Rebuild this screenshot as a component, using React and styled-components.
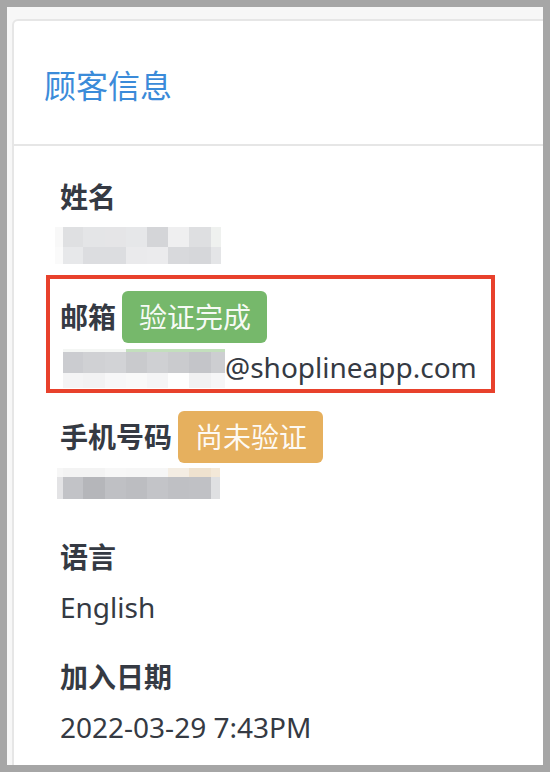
import React from "react";
import styled, { createGlobalStyle } from "styled-components";

const GlobalStyle = createGlobalStyle`
  html, body {
    margin: 0;
    padding: 0;
    background: #a6a6a6;
  }
  body {
    font-family: "Noto Sans", "Noto Sans CJK SC", sans-serif;
    -webkit-font-smoothing: antialiased;
  }
`;

const Frame = styled.div`
  width: 550px;
  height: 772px;
  box-sizing: border-box;
  border: 7px solid #a6a6a6;
  background: #f7f7f7;
  overflow: hidden;
  padding: 12px 0 0 5px;
`;

const Card = styled.section`
  width: 560px;
  min-height: 800px;
  box-sizing: border-box;
  background: #ffffff;
  border: 2px solid #e6e6e6;
  border-radius: 6px;
`;

const CardHeader = styled.header`
  height: 125px;
  box-sizing: border-box;
  display: flex;
  align-items: center;
  padding: 6px 30px 0;
  border-bottom: 2px solid #e6e6e6;
`;

const Title = styled.h2`
  margin: 0;
  font-size: 32px;
  font-weight: 400;
  line-height: 1;
  color: #3b8bd9;
`;

const CardBody = styled.div`
  padding: 25px 0 0 46px;
`;

const Field = styled.div`
  position: relative;
  display: flex;
  flex-direction: column;
  margin-bottom: 24px;
`;

const LabelRow = styled.div`
  height: 52px;
  display: flex;
  align-items: center;
  gap: 6px;
`;

const Label = styled.span`
  font-size: 28px;
  font-weight: 700;
  color: #353a43;
  line-height: 1;
`;

const badgeTones = {
  success: "#76b86b",
  warning: "#e6b05e",
};

const Badge = styled.span`
  height: 52px;
  display: inline-flex;
  align-items: center;
  padding: 0 16px 0 17px;
  border-radius: 6px;
  background: ${(p) => badgeTones[p.$tone]};
  color: rgba(255, 255, 255, 0.94);
  font-size: 28px;
  font-weight: 400;
  line-height: 1;
`;

const Value = styled.div`
  margin-top: 4px;
  height: 40px;
  display: flex;
  align-items: flex-start;
  font-size: 28px;
  line-height: 40px;
  color: #353a43;
`;

const ValueText = styled.span`
  white-space: nowrap;
`;

/* pixelated redaction block */
const Mosaic = styled.div`
  display: grid;
  grid-template-columns: ${(p) => p.$cols.map((c) => `${c}px`).join(" ")};
  grid-template-rows: ${(p) => p.$rows.map((r) => `${r}px`).join(" ")};
  margin-left: ${(p) => p.$shift || 0}px;
  margin-top: ${(p) => p.$top || 0}px;
  flex: none;
`;

const MosaicCell = styled.span`
  background: ${(p) => p.$color};
`;

const Highlight = styled.div`
  position: absolute;
  top: -16px;
  left: -14px;
  width: 449px;
  height: 118px;
  box-sizing: border-box;
  border: 4px solid #e8412c;
  pointer-events: none;
`;

const nameMask = {
  cols: [8, 20, 22, 21, 21, 21, 21, 22, 10],
  rows: [20, 17],
  colors: [
    ["#f8f8f8", "#dfe0e2", "#e4e5e7", "#e5e5e7", "#e6e7e9", "#d4d5d8", "#efeff0", "#dedfe1", "#eff1ef"],
    ["#fafafa", "#e7e8ea", "#dcdde0", "#dcdde0", "#eaeaec", "#ebebed", "#d8d9dc", "#d6d7da", "#e4e5e7"],
  ],
};

const emailMask = {
  cols: [20, 22, 21, 21, 21, 21, 22, 14],
  rows: [3, 21, 15],
  colors: [
    ["#f4f6f4", "#f4f6f4", "#f4f6f4", "#c3dfbd", "#c3dfbd", "#c3dfbd", "#c3dfbd", "#c3dfbd"],
    ["#cbccd0", "#d0d1d4", "#d2d3d6", "#c9cacd", "#cfd0d3", "#cacbce", "#c4c5c9", "#cdced1"],
    ["#f4f4f5", "#f2f2f3", "#f7f7f8", "#f9f9f9", "#f5f5f6", "#fefefe", "#f1f1f2", "#f6f6f7"],
  ],
};

const phoneMask = {
  cols: [6, 20, 22, 21, 21, 21, 21, 22, 9],
  rows: [9, 22],
  colors: [
    ["#f6f6f6", "#f3f3f3", "#f3f3f3", "#f7f7f7", "#f6f6f6", "#f6f6f6", "#f4ede3", "#efe2cf", "#f3e8d8"],
    ["#e3e3e5", "#c2c3c7", "#b5b6ba", "#bfc0c4", "#bcbdc1", "#c3c4c8", "#bfc0c4", "#c0c1c5", "#dfe0e2"],
  ],
};

function Redacted({ mask, shift, top }) {
  return (
    <Mosaic $cols={mask.cols} $rows={mask.rows} $shift={shift} $top={top}>
      {mask.colors.flatMap((row, r) =>
        row.map((c, i) => <MosaicCell key={`${r}-${i}`} $color={c} />)
      )}
    </Mosaic>
  );
}

export default function App() {
  return (
    <>
      <GlobalStyle />
      <Frame>
        <Card>
          <CardHeader>
            <Title>顾客信息</Title>
          </CardHeader>
          <CardBody>
            <Field>
              <LabelRow>
                <Label>姓名</Label>
              </LabelRow>
              <Value>
                <Redacted mask={nameMask} shift={-5} top={0} />
              </Value>
            </Field>

            <Field>
              <Highlight />
              <LabelRow>
                <Label>邮箱</Label>
                <Badge $tone="success">验证完成</Badge>
              </LabelRow>
              <Value>
                <Redacted mask={emailMask} shift={3} top={2} />
                <ValueText>@shoplineapp.com</ValueText>
              </Value>
            </Field>

            <Field>
              <LabelRow>
                <Label>手机号码</Label>
                <Badge $tone="warning">尚未验证</Badge>
              </LabelRow>
              <Value>
                <Redacted mask={phoneMask} shift={-3} top={1} />
              </Value>
            </Field>

            <Field>
              <LabelRow>
                <Label>语言</Label>
              </LabelRow>
              <Value>
                <ValueText>English</ValueText>
              </Value>
            </Field>

            <Field>
              <LabelRow>
                <Label>加入日期</Label>
              </LabelRow>
              <Value>
                <ValueText>2022-03-29 7:43PM</ValueText>
              </Value>
            </Field>
          </CardBody>
        </Card>
      </Frame>
    </>
  );
}
